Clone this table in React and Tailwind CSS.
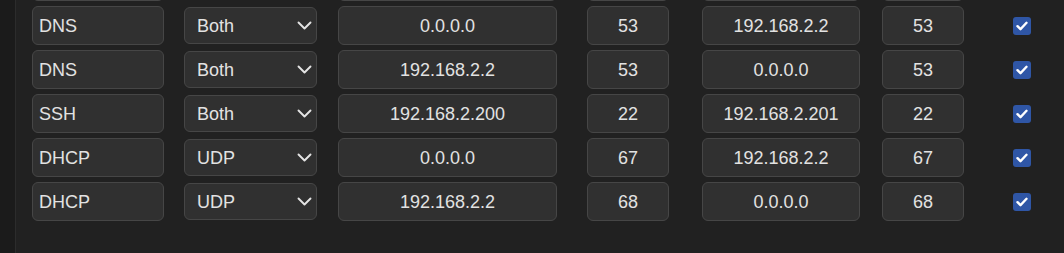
import React from "react";

const rows = [
  ["DNS", "Both", "192.168.2.2", "53", "0.0.0.0", "53"],
  ["DNS", "Both", "0.0.0.0", "53", "192.168.2.2", "53"],
  ["DNS", "Both", "192.168.2.2", "53", "0.0.0.0", "53"],
  ["SSH", "Both", "192.168.2.200", "22", "192.168.2.201", "22"],
  ["DHCP", "UDP", "0.0.0.0", "67", "192.168.2.2", "67"],
  ["DHCP", "UDP", "192.168.2.2", "68", "0.0.0.0", "68"],
];

const box =
  "bg-[#303030] border border-[#464646] rounded-[6px] text-[18px] leading-none text-[#e2e2e2] flex items-center";

function Chevron() {
  return (
    <svg width="15" height="9" viewBox="0 0 15 9" fill="none">
      <path d="M1.5 1.5l6 6 6-6" stroke="#e4e4e4" strokeWidth="1.9" strokeLinecap="round" strokeLinejoin="round" />
    </svg>
  );
}

function Check() {
  return (
    <div className="w-[18px] h-[18px] rounded-[3px] bg-[#2f56a6] flex items-center justify-center">
      <svg width="12" height="10" viewBox="0 0 12 10" fill="none">
        <path d="M1.5 5.2l3 3L10.5 1.8" stroke="#ffffff" strokeWidth="2.4" strokeLinecap="round" strokeLinejoin="round" />
      </svg>
    </div>
  );
}

export default function App() {
  return (
    <div
      className="w-[1064px] h-[253px] bg-[#212121] flex overflow-hidden"
      style={{ fontFamily: '"Liberation Sans", Arial, sans-serif' }}
    >
      <div className="w-[16px] h-full bg-[#1b1b1b] border-r border-[#2c2c2c] shrink-0" />
      <div className="flex flex-col gap-[5px] pl-[16px] mt-[-38px]">
        {rows.map((r, i) => (
          <div key={i} className="flex items-center h-[39px]">
            <div className={`${box} h-[39px] w-[132px] pl-[6px] mr-[20px]`}>{r[0]}</div>
            <div className={`${box} h-[37px] w-[133px] pl-[12px] pr-[4px] justify-between mr-[21px]`}>
              <span>{r[1]}</span>
              <Chevron />
            </div>
            <div className={`${box} h-[39px] w-[219px] justify-center mr-[30px]`}>{r[2]}</div>
            <div className={`${box} h-[39px] w-[82px] justify-center mr-[33px]`}>{r[3]}</div>
            <div className={`${box} h-[39px] w-[158px] justify-center mr-[22px]`}>{r[4]}</div>
            <div className={`${box} h-[39px] w-[82px] justify-center mr-[49px]`}>{r[5]}</div>
            <Check />
          </div>
        ))}
      </div>
    </div>
  );
}
